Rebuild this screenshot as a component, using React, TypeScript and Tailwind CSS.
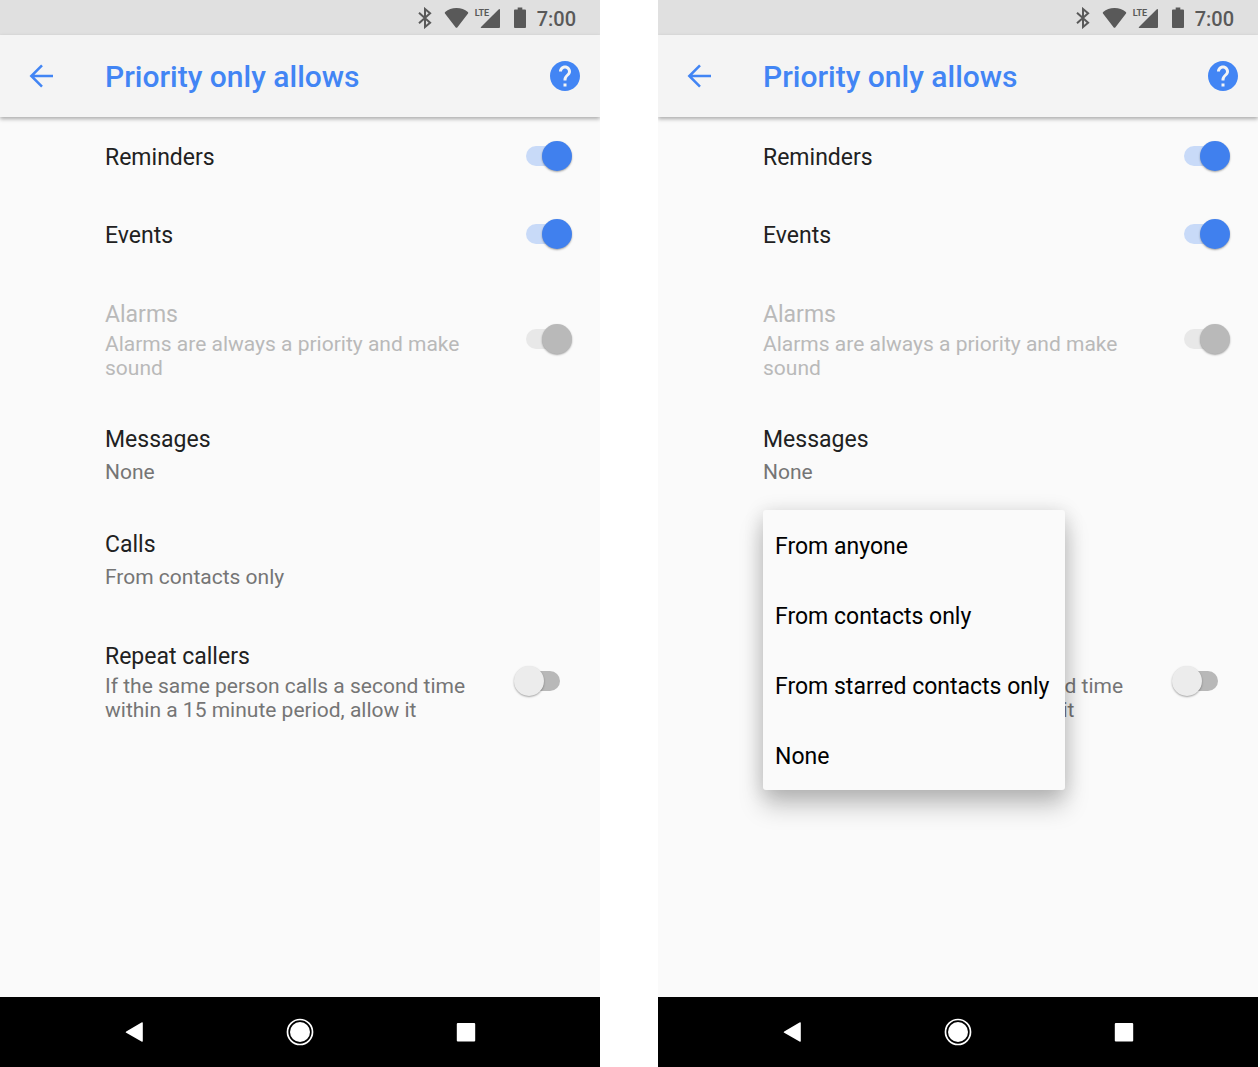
import { useId, useState } from "react";

function StatusBar() {
  return (
    <div className="flex h-[35px] items-center justify-end bg-[#e0e0e0] pr-6 text-[#595959]">
      <svg className="mr-[11px] h-[22px] w-[15px]" viewBox="0 0 15 22" fill="none" stroke="currentColor" strokeWidth="2" aria-label="Bluetooth">
        <path d="M1 5.800 L12.100 15.700 L7 20 V2 L12.100 6.300 L1 16.200" />
      </svg>
      <svg className="mr-[6px] h-[22px] w-[25px]" viewBox="0 0 26 22" preserveAspectRatio="none" fill="currentColor" aria-label="Wi-Fi">
        <path d="M13 20.8 Q12.4 20.8 12 20.3 L1 6.4 Q.4 5.6 1.2 5 Q6 1 13 1 T24.8 5 Q25.6 5.6 25 6.4 L14 20.3 Q13.600 20.8 13 20.8Z" />
      </svg>
      <div className="relative mr-[14px] h-[22px] w-[25px]">
        <span className="absolute top-0 left-0 text-[9px] leading-[13px] font-bold">LTE</span>
        <svg className="h-[22px] w-[25px]" viewBox="1 0 25 22" fill="currentColor" aria-label="Signal">
          <path d="M26 3 V20 Q26 21 25 21 H7.500 Q6 21 7 20 L24.300 2.700 Q26 1.200 26 3Z" />
        </svg>
      </div>
      <svg className="mr-[11px] h-[22px] w-[12px]" viewBox="0 0 13 22" preserveAspectRatio="none" fill="currentColor" aria-label="Battery">
        <path d="M4 .5 H9 V2.500 H12 Q13 2.500 13 3.500 V20 Q13 21 12 21 H1 Q0 21 0 20 V3.500 Q0 2.500 1 2.500 H4Z" />
      </svg>
      <span className="pt-[2px] text-xl leading-6 font-medium">7:00</span>
    </div>
  );
}

function Header() {
  return (
    <header className="relative flex h-[82px] items-center bg-[#f4f4f4] pr-5 pl-7 text-[#4285f4] shadow-[0_2px_4px_rgba(0,0,0,0.32)]">
      <button aria-label="Back" className="mr-[51px]">
        <svg className="h-[26px] w-[26px]" viewBox="0 0 26 26" fill="none" stroke="currentColor" strokeWidth="2.500">
          <path d="M25 13 H3.500 M14 2.300 L3.300 13 L14 23.700" />
        </svg>
      </button>
      <h1 className="flex-1 pt-[2px] text-3xl leading-9 font-medium">Priority only allows</h1>
      <button aria-label="Help">
        <svg className="h-[30px] w-[30px]" viewBox="2 2 20 20" fill="currentColor">
          <path d="M12 2C6.480 2 2 6.480 2 12s4.480 10 10 10 10-4.480 10-10S17.520 2 12 2zm1 17h-2v-2h2v2zm2.070-7.750-.9.920C13.450 12.900 13 13.500 13 15h-2v-.5c0-1.100.450-2.100 1.170-2.830l1.240-1.260c.370-.360.590-.860.590-1.410 0-1.100-.9-2-2-2s-2 .9-2 2H8c0-2.210 1.790-4 4-4s4 1.790 4 4c0 .880-.360 1.680-.930 2.250z" />
        </svg>
      </button>
    </header>
  );
}

interface ToggleRowProps {
  title: string;
  detail?: string;
  on?: boolean;
  disabled?: boolean;
}

function ToggleRow({ title, detail, on = false, disabled = false }: ToggleRowProps) {
  const id = useId();
  const [checked, setChecked] = useState(on);
  return (
    <div className={detail ? "flex items-center pt-6 pb-[25px] pr-7 pl-[105px]" : "flex items-center py-[23px] pr-7 pl-[105px]"}>
      <label htmlFor={id} className={disabled ? "flex flex-1 flex-col gap-[3px] pt-1 pr-9 text-[#b9b9b9]" : "flex flex-1 flex-col gap-[3px] pt-1 pr-9 text-[#212121]"}>
        <span className="text-[23px] leading-7">{title}</span>
        {detail && (
          <span className={disabled ? "text-[21px] leading-6" : "text-[21px] leading-6 text-[#757575]"}>{detail}</span>
        )}
      </label>
      <input
        id={id}
        type="checkbox"
        role="switch"
        checked={checked}
        disabled={disabled}
        onChange={(e) => setChecked(e.target.checked)}
        className="relative h-[30px] w-[58px] appearance-none before:absolute before:inset-y-[5px] before:right-3 before:left-3 before:rounded-full before:bg-[#b8b8b8] after:absolute after:top-0 after:left-0 after:size-[30px] after:rounded-full after:bg-[#ececec] after:shadow-[0_1px_2px_rgba(0,0,0,0.35)] checked:before:bg-[#c8daf8] checked:after:left-7 checked:after:bg-[#4080ee] disabled:before:bg-[#e8e8e8] disabled:after:bg-[#b9b9b9]"
      />
    </div>
  );
}

function ChoiceRow({ title, value }: { title: string; value: string }) {
  return (
    <button className="flex w-full flex-col gap-[6px] pt-[21px] pb-[26px] pl-[105px] text-left">
      <span className="text-[23px] leading-7 text-[#212121]">{title}</span>
      <span className="text-[21px] leading-6 text-[#757575]">{value}</span>
    </button>
  );
}

const callOptions = ["From anyone", "From contacts only", "From starred contacts only", "None"];

function CallMenu() {
  return (
    <div role="menu" className="absolute top-0 left-[105px] z-10 flex w-[302px] flex-col rounded-[3px] bg-[#fafafa] shadow-[0_16px_24px_rgba(0,0,0,0.22),0_2px_20px_rgba(0,0,0,0.14)]">
      {callOptions.map((option) => (
        <button key={option} role="menuitem" className="h-[70px] px-3 pt-[3px] text-left text-[23px] leading-7 whitespace-nowrap text-black">
          {option}
        </button>
      ))}
    </div>
  );
}

function NavBar() {
  return (
    <nav className="flex h-[70px] items-center justify-center gap-[138px] bg-black text-white">
      <button aria-label="Back">
        <svg className="h-7 w-7" viewBox="0 0 28 28" fill="currentColor">
          <path d="M6.200 13.400 L21.500 4.400 Q22.800 3.800 22.800 5 V23 Q22.800 24.200 21.500 23.600 L6.200 14.800 Q5 14 6.200 13.400Z" />
        </svg>
      </button>
      <button aria-label="Home">
        <svg className="h-7 w-7" viewBox="0 0 28 28" fill="currentColor">
          <circle cx="14" cy="14" r="12.500" fill="none" stroke="currentColor" strokeWidth="1.700" />
          <circle cx="14" cy="14" r="10" />
        </svg>
      </button>
      <button aria-label="Recent apps">
        <svg className="h-7 w-7" viewBox="0 0 28 28" fill="currentColor">
          <rect x="4.800" y="5" width="18.400" height="18.500" rx="1" />
        </svg>
      </button>
    </nav>
  );
}

function Phone({ menuOpen = false }: { menuOpen?: boolean }) {
  return (
    <section className="flex flex-col overflow-hidden bg-[#fafafa]">
      <StatusBar />
      <Header />
      <main className="flex-1">
        <ToggleRow title="Reminders" on />
        <ToggleRow title="Events" on />
        <ToggleRow title="Alarms" detail="Alarms are always a priority and make sound" on disabled />
        <ChoiceRow title="Messages" value="None" />
        <div className="relative">
          <ChoiceRow title="Calls" value="From contacts only" />
          {menuOpen && <CallMenu />}
        </div>
        <ToggleRow title="Repeat callers" detail="If the same person calls a second time within a 15 minute period, allow it" />
      </main>
      <NavBar />
    </section>
  );
}

export default function App() {
  return (
    <div className="grid min-h-screen grid-cols-2 gap-[58px] bg-white pr-[2px] font-[Roboto,sans-serif]">
      <Phone />
      <Phone menuOpen />
    </div>
  );
}
